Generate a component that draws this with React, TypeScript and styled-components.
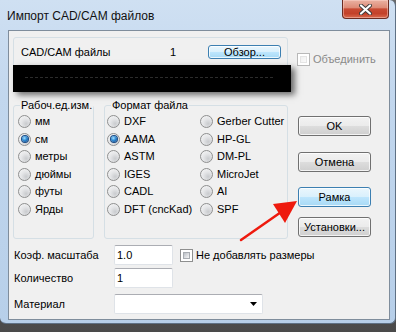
import React from "react";
import styled, { createGlobalStyle } from "styled-components";

const GlobalStyle = createGlobalStyle`
  html, body { margin: 0; padding: 0; background: #4d4d4d; }
  body { font-family: "Liberation Sans", Arial, sans-serif; font-size: 11px; color: #000; }
  #root { width: 396px; height: 332px; overflow: hidden; }
  * { box-sizing: border-box; }
`;

const Page = styled.div`
  position: relative;
  width: 396px;
  height: 332px;
  background: linear-gradient(180deg, #6a6a6a 0%, #4a4a4a 100%);
`;

const Window = styled.div`
  width: 396px;
  height: 324px;
  display: flex;
  flex-direction: column;
  padding: 0 5px 3px 8px;
  background: linear-gradient(180deg, #cfe0f2 0%, #c2d7ee 30%, #b7cfe9 100%);
  border-right: 1px solid #5f7185;
  border-bottom: 1px solid #5f7185;
  border-radius: 0 6px 6px 6px;
`;

const TitleBar = styled.div`
  height: 30px;
  display: flex;
  justify-content: space-between;
  align-items: flex-start;
`;

const Title = styled.div`
  font-family: "Liberation Sans", Arial, sans-serif;
  font-size: 12px;
  color: #111;
  margin-top: 9px;
  margin-left: -1px;
`;

const CloseButton = styled.div`
  width: 47px;
  height: 19px;
  margin-right: 1px;
  border: 1px solid #6b2c22;
  border-top: none;
  border-radius: 0 0 4px 4px;
  background: linear-gradient(180deg, #eab2a3 0%, #de8c78 42%, #c84a33 50%, #c34129 75%, #d96a4e 100%);
  box-shadow: inset 0 0 0 1px rgba(255, 220, 210, 0.45);
  display: flex;
  align-items: center;
  justify-content: center;
`;

const Client = styled.div`
  flex: 1;
  background: #f0f0f0;
  border: 1px solid #7f8d9c;
  display: flex;
  flex-direction: column;
  padding: 6px 0 0 4px;
`;

const TopRow = styled.div`
  display: flex;
  align-items: flex-start;
`;

const FilePanel = styled.div`
  width: 275px;
  border: 1px solid #d5dfe5;
  border-radius: 3px;
  padding-top: 7px;
  display: flex;
  flex-direction: column;
`;

const FileHeader = styled.div`
  height: 14px;
  display: grid;
  grid-template-columns: 149px 38px 73px;
  align-items: center;
  padding-left: 7px;
`;

const Text = styled.span<{ $muted?: boolean }>`
  font-size: 11px;
  line-height: 13px;
  white-space: nowrap;
  color: ${(p) => (p.$muted ? "#8a8a8a" : "#000")};
`;

const Redaction = styled.div`
  position: relative;
  z-index: 1;
  width: 278px;
  height: 27px;
  margin: 6px 0 -1px -1px;
  background: #000;
  box-shadow: 4px 3px 6px rgba(0, 0, 0, 0.55);
  padding: 12px 0 0 12px;
`;

const RedactionTrace = styled.div`
  width: 248px;
  height: 1px;
  background: repeating-linear-gradient(90deg, #2c2c2c 0 3px, transparent 3px 5px);
`;

const Button = styled.div<{ $hot?: boolean; $w?: number; $h?: number }>`
  width: ${(p) => p.$w ?? 73}px;
  height: ${(p) => p.$h ?? 20}px;
  border: 1px solid ${(p) => (p.$hot ? "#3c7fb1" : "#707070")};
  border-radius: 3px;
  background: ${(p) =>
    p.$hot
      ? "linear-gradient(180deg, #eaf6fd 0%, #d9f0fc 50%, #bee6fd 50%, #a7d9f5 100%)"
      : "linear-gradient(180deg, #f2f2f2 0%, #ebebeb 50%, #dddddd 50%, #cfcfcf 100%)"};
  box-shadow: inset 0 0 0 1px rgba(255, 255, 255, 0.75);
  display: flex;
  align-items: center;
  justify-content: center;
  font-size: 11px;
  color: #000;
  white-space: nowrap;
`;

const CheckRow = styled.label<{ $mt?: number; $ml?: number }>`
  display: flex;
  align-items: center;
  gap: 3px;
  margin-top: ${(p) => p.$mt ?? 0}px;
  margin-left: ${(p) => p.$ml ?? 0}px;
`;

const CheckBox = styled.span<{ $disabled?: boolean }>`
  width: 13px;
  height: 13px;
  border: 1px solid ${(p) => (p.$disabled ? "#b8b8b8" : "#8e8f8f")};
  background: #fff;
  padding: 2px;
  display: inline-flex;
  &::after {
    content: "";
    flex: 1;
    background: ${(p) =>
      p.$disabled
        ? "linear-gradient(135deg, #f0f0f0 0%, #fafafa 100%)"
        : "linear-gradient(135deg, #b9bdc4 0%, #dfe1e4 60%, #f4f4f4 100%)"};
    border: 1px solid ${(p) => (p.$disabled ? "#e4e4e4" : "#a8acb1")};
  }
`;

const MidRow = styled.div`
  display: flex;
  align-items: flex-start;
  margin-top: 7px;
`;

const Group = styled.fieldset<{ $w: number; $ml?: number }>`
  width: ${(p) => p.$w}px;
  height: 140px;
  margin: 0 0 0 ${(p) => p.$ml ?? 0}px;
  padding: 0;
  min-width: 0;
  border: 1px solid #d5dfe5;
  border-radius: 3px;
`;

const Legend = styled.legend`
  margin-left: 6px;
  padding: 0 1px;
  font-size: 11px;
  line-height: 13px;
  white-space: nowrap;
`;

const RadioList = styled.div<{ $cols: number; $pl: number }>`
  display: grid;
  grid-auto-flow: column;
  grid-template-rows: repeat(6, 17.5px);
  grid-template-columns: ${(p) => (p.$cols === 2 ? "93px 1fr" : "1fr")};
  padding: 1px 0 0 ${(p) => p.$pl}px;
`;

const RadioItem = styled.div`
  display: flex;
  align-items: center;
  gap: 4px;
`;

const RadioDot = styled.span<{ $on?: boolean }>`
  width: 13px;
  height: 13px;
  border-radius: 50%;
  border: 1px solid #8e8f8f;
  background: radial-gradient(circle at 65% 70%, #c9cbce 0%, #e4e5e7 45%, #f9f9f9 100%);
  display: inline-flex;
  align-items: center;
  justify-content: center;
  flex: none;
  &::after {
    content: "";
    display: ${(p) => (p.$on ? "block" : "none")};
    width: 6px;
    height: 6px;
    border-radius: 50%;
    background: radial-gradient(circle at 40% 35%, #a6e0ff 0%, #2f8ad3 45%, #0d3f80 100%);
    box-shadow: 0 0 0 1px #1b4c86;
  }
`;

const ButtonColumn = styled.div`
  display: flex;
  flex-direction: column;
  margin-left: 10px;
  padding-top: 17px;
`;

const Spacer = styled.div<{ $h: number }>`
  height: ${(p) => p.$h}px;
  flex: none;
`;

const Form = styled.div`
  display: flex;
  flex-direction: column;
  margin-top: 6px;
`;

const FormRow = styled.div<{ $mt?: number }>`
  display: flex;
  align-items: center;
  margin-top: ${(p) => p.$mt ?? 0}px;
`;

const FormLabel = styled.span`
  width: 101px;
  padding-left: 1px;
  font-size: 11px;
  white-space: nowrap;
`;

const TextBox = styled.div<{ $w: number }>`
  width: ${(p) => p.$w}px;
  height: 20px;
  background: #fff;
  border: 1px solid #dfe3e8;
  border-top-color: #abadb3;
  border-radius: 2px;
  display: flex;
  align-items: center;
  padding-left: 2px;
  font-size: 11px;
`;

const Combo = styled.div`
  width: 149px;
  height: 20px;
  background: #fff;
  border: 1px solid #dfe3e8;
  border-top-color: #abadb3;
  border-radius: 2px;
  display: flex;
  align-items: center;
  justify-content: flex-end;
  padding-right: 5px;
`;

const ArrowOverlay = styled.svg`
  position: absolute;
  left: 0;
  top: 0;
  pointer-events: none;
`;

const units = ["мм", "см", "метры", "дюймы", "футы", "Ярды"];
const formats = [
  "DXF",
  "AAMA",
  "ASTM",
  "IGES",
  "CADL",
  "DFT (cncKad)",
  "Gerber Cutter",
  "HP-GL",
  "DM-PL",
  "MicroJet",
  "AI",
  "SPF",
];

export default function App() {
  return (
    <Page>
      <GlobalStyle />
      <Window>
        <TitleBar>
          <Title>Импорт CAD/CAM файлов</Title>
          <CloseButton>
            <svg width="13" height="11" viewBox="0 0 13 11">
              <path d="M2 1.5 L11 9.5 M11 1.5 L2 9.5" stroke="#3b3b3b" strokeWidth="4" strokeLinecap="round" />
              <path d="M2 1.5 L11 9.5 M11 1.5 L2 9.5" stroke="#ffffff" strokeWidth="2.2" strokeLinecap="round" />
            </svg>
          </CloseButton>
        </TitleBar>
        <Client>
          <TopRow>
            <FilePanel>
              <FileHeader>
                <Text>CAD/CAM файлы</Text>
                <Text>1</Text>
                <Button $hot $h={14}>Обзор...</Button>
              </FileHeader>
              <Redaction>
                <RedactionTrace />
              </Redaction>
            </FilePanel>
            <CheckRow $mt={16} $ml={9}>
              <CheckBox $disabled />
              <Text $muted>Объединить</Text>
            </CheckRow>
          </TopRow>
          <MidRow>
            <Group $w={81}>
              <Legend>Рабоч.ед.изм.</Legend>
              <RadioList $cols={1} $pl={4}>
                {units.map((u) => (
                  <RadioItem key={u}>
                    <RadioDot $on={u === "см"} />
                    <Text>{u}</Text>
                  </RadioItem>
                ))}
              </RadioList>
            </Group>
            <Group $w={184} $ml={10}>
              <Legend>Формат файла</Legend>
              <RadioList $cols={2} $pl={2}>
                {formats.map((f) => (
                  <RadioItem key={f}>
                    <RadioDot $on={f === "AAMA"} />
                    <Text>{f}</Text>
                  </RadioItem>
                ))}
              </RadioList>
            </Group>
            <ButtonColumn>
              <Button>OK</Button>
              <Spacer $h={16} />
              <Button>Отмена</Button>
              <Spacer $h={15} />
              <Button $hot>Рамка</Button>
              <Spacer $h={10} />
              <Button>Установки...</Button>
            </ButtonColumn>
          </MidRow>
          <Form>
            <FormRow>
              <FormLabel>Коэф. масштаба</FormLabel>
              <TextBox $w={59}>1.0</TextBox>
              <CheckRow $ml={7}>
                <CheckBox />
                <Text>Не добавлять размеры</Text>
              </CheckRow>
            </FormRow>
            <FormRow $mt={3}>
              <FormLabel>Количество</FormLabel>
              <TextBox $w={59}>1</TextBox>
            </FormRow>
            <FormRow $mt={6}>
              <FormLabel>Материал</FormLabel>
              <Combo>
                <svg width="7" height="4" viewBox="0 0 7 4">
                  <path d="M0 0 H7 L3.5 4 Z" fill="#000" />
                </svg>
              </Combo>
            </FormRow>
          </Form>
        </Client>
      </Window>
      <ArrowOverlay width="396" height="332" viewBox="0 0 396 332">
        <line x1="241" y1="240" x2="284" y2="210" stroke="#ee1a0e" strokeWidth="2.5" strokeLinecap="round" />
        <path d="M297 201 L273 204 L285 223 Z" fill="#ee1a0e" />
      </ArrowOverlay>
    </Page>
  );
}
